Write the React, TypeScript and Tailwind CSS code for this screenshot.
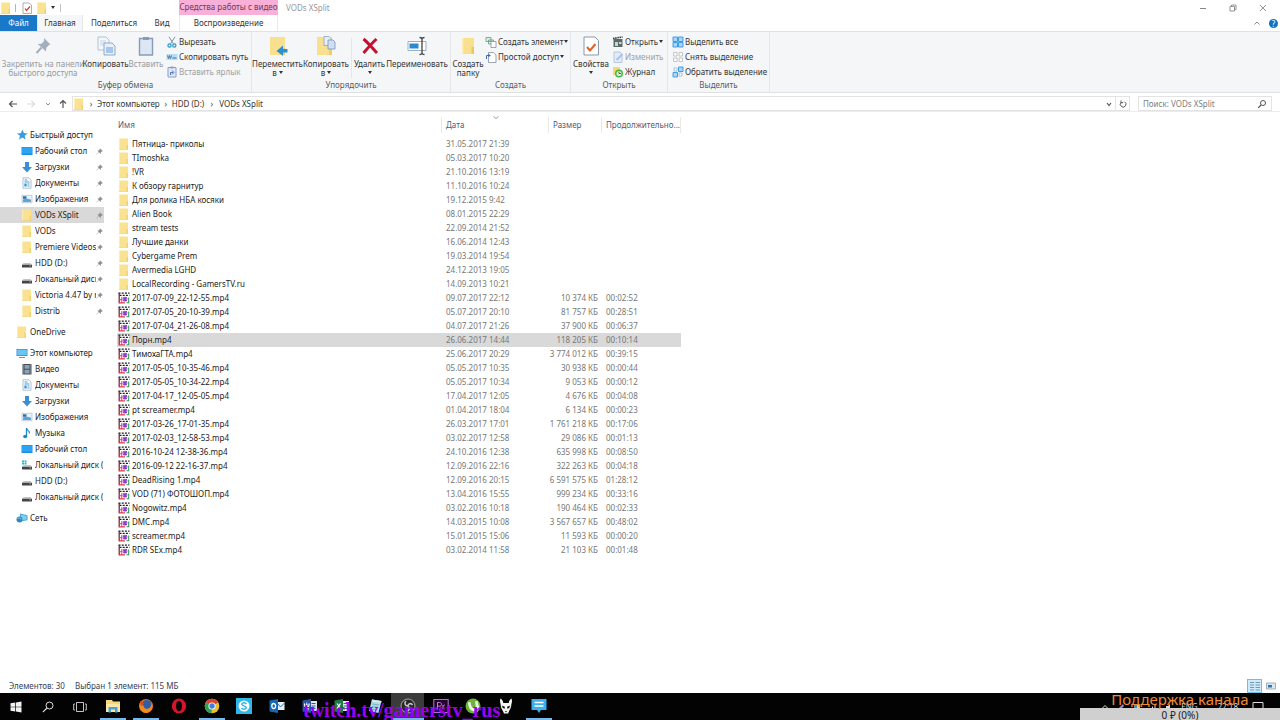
import type { ReactNode } from "react";

type IconName =
  | "folder" | "desktop" | "download" | "doc" | "picture" | "drive" | "sysdrive" | "pc" | "video" | "music" | "network" | "star";

type SideItem = { label: string; icon: IconName; active?: boolean };

const QUICK: SideItem[] = [
  { label: "Рабочий стол", icon: "desktop" },
  { label: "Загрузки", icon: "download" },
  { label: "Документы", icon: "doc" },
  { label: "Изображения", icon: "picture" },
  { label: "VODs XSplit", icon: "folder", active: true },
  { label: "VODs", icon: "folder" },
  { label: "Premiere Videos", icon: "folder" },
  { label: "HDD (D:)", icon: "drive" },
  { label: "Локальный диск", icon: "drive" },
  { label: "Victoria 4.47 by r", icon: "folder" },
  { label: "Distrib", icon: "folder" },
];

const COMPUTER: SideItem[] = [
  { label: "Видео", icon: "video" },
  { label: "Документы", icon: "doc" },
  { label: "Загрузки", icon: "download" },
  { label: "Изображения", icon: "picture" },
  { label: "Музыка", icon: "music" },
  { label: "Рабочий стол", icon: "desktop" },
  { label: "Локальный диск (C:)", icon: "sysdrive" },
  { label: "HDD (D:)", icon: "drive" },
  { label: "Локальный диск (E:)", icon: "drive" },
];

type Row = { name: string; date: string; size?: string; length?: string; selected?: boolean };

const ROWS: Row[] = [
  { name: "Пятница- приколы", date: "31.05.2017 21:39" },
  { name: "TImoshka", date: "05.03.2017 10:20" },
  { name: "!VR", date: "21.10.2016 13:19" },
  { name: "К обзору гарнитур", date: "11.10.2016 10:24" },
  { name: "Для ролика НБА косяки", date: "19.12.2015 9:42" },
  { name: "Alien Book", date: "08.01.2015 22:29" },
  { name: "stream tests", date: "22.09.2014 21:52" },
  { name: "Лучшие данки", date: "16.06.2014 12:43" },
  { name: "Cybergame Prem", date: "19.03.2014 19:54" },
  { name: "Avermedia LGHD", date: "24.12.2013 19:05" },
  { name: "LocalRecording - GamersTV.ru", date: "14.09.2013 10:21" },
  { name: "2017-07-09_22-12-55.mp4", date: "09.07.2017 22:12", size: "10 374 КБ", length: "00:02:52" },
  { name: "2017-07-05_20-10-39.mp4", date: "05.07.2017 20:10", size: "81 757 КБ", length: "00:28:51" },
  { name: "2017-07-04_21-26-08.mp4", date: "04.07.2017 21:26", size: "37 900 КБ", length: "00:06:37" },
  { name: "Порн.mp4", date: "26.06.2017 14:44", size: "118 205 КБ", length: "00:10:14", selected: true },
  { name: "ТимохаГТА.mp4", date: "25.06.2017 20:29", size: "3 774 012 КБ", length: "00:39:15" },
  { name: "2017-05-05_10-35-46.mp4", date: "05.05.2017 10:35", size: "30 938 КБ", length: "00:00:44" },
  { name: "2017-05-05_10-34-22.mp4", date: "05.05.2017 10:34", size: "9 053 КБ", length: "00:00:12" },
  { name: "2017-04-17_12-05-05.mp4", date: "17.04.2017 12:05", size: "4 676 КБ", length: "00:04:08" },
  { name: "pt screamer.mp4", date: "01.04.2017 18:04", size: "6 134 КБ", length: "00:00:23" },
  { name: "2017-03-26_17-01-35.mp4", date: "26.03.2017 17:01", size: "1 761 218 КБ", length: "00:17:06" },
  { name: "2017-02-03_12-58-53.mp4", date: "03.02.2017 12:58", size: "29 086 КБ", length: "00:01:13" },
  { name: "2016-10-24 12-38-36.mp4", date: "24.10.2016 12:38", size: "635 998 КБ", length: "00:08:50" },
  { name: "2016-09-12 22-16-37.mp4", date: "12.09.2016 22:16", size: "322 263 КБ", length: "00:04:18" },
  { name: "DeadRising 1.mp4", date: "12.09.2016 20:15", size: "6 591 575 КБ", length: "01:28:12" },
  { name: "VOD (71) ФОТОШОП.mp4", date: "13.04.2016 15:55", size: "999 234 КБ", length: "00:33:16" },
  { name: "Nogowitz.mp4", date: "03.02.2016 10:18", size: "190 464 КБ", length: "00:02:33" },
  { name: "DMC.mp4", date: "14.03.2015 10:08", size: "3 567 657 КБ", length: "00:48:02" },
  { name: "screamer.mp4", date: "15.01.2015 15:06", size: "11 593 КБ", length: "00:00:20" },
  { name: "RDR SEx.mp4", date: "03.02.2014 11:58", size: "21 103 КБ", length: "00:01:48" },
];

function Svg({ box = 12, size = "size-3", children }: { box?: number; size?: string; children: ReactNode }) {
  return (
    <svg viewBox={`0 0 ${box} ${box}`} className={`${size} shrink-0`} fill="none" aria-hidden="true">
      {children}
    </svg>
  );
}

function FolderShape() {
  return (
    <>
      <path d="M1 .5h9v11H1z" fill="#fae290" />
      <path d="M1 .5h1v11H1z" fill="#fcedb8" />
      <path d="M8.500 7H10v4.500H8.500z" fill="#f3d26c" />
      <path d="M1 11h9v.5H1z" fill="#e6c668" />
    </>
  );
}

function SmallIcon({ name }: { name: IconName }) {
  return (
    <Svg>
      {name === "folder" && <FolderShape />}
      {name === "desktop" && (
        <>
          <path d="M.5 2h11v8H.5z" fill="#1b8fe0" />
          <path d="M1 2.500h10v6H1z" fill="#2ba4f4" />
        </>
      )}
      {name === "download" && <path d="M4 1h4v5h3L6 11.500 1 6h3z" fill="#3b8dd6" />}
      {name === "doc" && (
        <>
          <path d="M2 .8h6L10 3v8.200H2z" fill="#fff" stroke="#8aa6bb" strokeWidth=".7" />
          <path d="M3.500 3h3M3.500 5h5M6.500 7h2M6.500 9h2" stroke="#4d9ac6" />
          <path d="M3.300 6.500h2.400v3H3.300z" fill="#3f97ce" />
        </>
      )}
      {name === "picture" && (
        <>
          <path d="M1 2.300h10v7.500H1z" fill="#e9f3fa" stroke="#9db4c4" strokeWidth=".6" />
          <path d="M2 3.300h3.500v2.500H2z" fill="#2e6faa" />
          <path d="M2 6.500c3-1 5-1 8 .3V9H2z" fill="#5ba6d6" />
        </>
      )}
      {(name === "drive" || name === "sysdrive") && (
        <>
          <path d="M2.500 6h7l1.500 2H1z" fill="#c4c4c4" />
          <path d="M1 7.800h10v2.700H1z" fill="#444" />
          <path d="M8.500 8.800H10" stroke="#b8e0b8" strokeWidth=".7" />
          {name === "sysdrive" && <path d="M1 1.500h2v1.700H1zM3.500 1.500h2v1.700h-2zM1 3.700h2v1.700H1zM3.500 3.700h2v1.700h-2z" fill="#21b5d8" />}
        </>
      )}
      {name === "pc" && (
        <>
          <path d="M.5 2h11v7H.5z" fill="#3a8fc9" />
          <path d="M1.200 2.700h9.600v5.500H1.200z" fill="#67c6f2" />
          <path d="M3 10.500h6" stroke="#7d8f9b" />
        </>
      )}
      {name === "video" && (
        <>
          <path d="M1.500 1h9v10.500h-9z" fill="#4c4c4c" />
          <path d="M3.500 2h5v3.800h-5zM3.500 6.800h5v3.800h-5z" fill="#83a7c1" />
          <path d="M2.500 1.500v9.500M9.500 1.500v9.500" stroke="#ddd" strokeWidth=".6" strokeDasharray="1 1" />
        </>
      )}
      {name === "music" && (
        <>
          <path d="M5.500 1v8" stroke="#1d87cf" strokeWidth="1.300" />
          <path d="M5.500 1c.3 2.500 3.500 2.500 3 5.500" stroke="#1d87cf" strokeWidth="1.200" />
          <ellipse cx="4.200" cy="9.500" rx="2.100" ry="1.700" fill="#1d87cf" />
        </>
      )}
      {name === "network" && (
        <>
          <path d="M4 1.500l7.500 1.800v5L4 9.500z" fill="#47a9da" />
          <path d="M4.800 2.800l5.700 1.300v3.300l-5.700.8z" fill="#7fd1f0" />
          <circle cx="3.500" cy="7.500" r="3" fill="#3388bb" />
          <path d="M1.500 6.500c1.500-1 3-.5 4 .8" stroke="#a9ddf0" strokeWidth=".7" />
        </>
      )}
      {name === "star" && <path d="M6.500.8l1.400 3.300 3.600.3-2.800 2.300.9 3.700-3.200-2-3.500 2 1.100-3.600L.8 4.600l3.900-.3z" fill="#3a9be0" />}
    </Svg>
  );
}

function PinIcon() {
  return (
    <Svg box={8} size="size-[7px]">
      <path d="M4.500.8l2.800 2.700-.8.2-1.300 1.400v1.300L2 3.200h1.300l1.200-1.400zM3 4.800L.8 7.200" fill="#8a8a8a" stroke="#8a8a8a" strokeWidth=".6" />
    </Svg>
  );
}

function ClipIcon() {
  return (
    <Svg>
      <path d="M.5 1h10.800v10.200H.5z" fill="#fff" />
      <path d="M.5 1.200h11M1.500 3.400h10" stroke="#1a1a1a" strokeWidth="1.300" strokeDasharray="2 1.200" />
      <path d="M1.200 1v10.200" stroke="#7d1230" strokeWidth="1.200" />
      <path d="M1 10.900h6M1 7.800h3" stroke="#e03c50" strokeWidth="1.100" />
      <path d="M3.800 5v6" stroke="#d83048" strokeWidth=".9" />
      <path d="M10.700 5.500v5.700M8.500 10.800h2.700" stroke="#2f9a58" strokeWidth="1.100" />
      <path d="M4.500 7h5M7 4.800v4.900M5.300 5.300l3.400 3.700M8.800 5.200L5.300 9" stroke="#8b3fd0" strokeWidth="1.200" />
    </Svg>
  );
}

function Caret() {
  return (
    <svg viewBox="0 0 4 3" className="h-[3px] w-1 shrink-0" aria-hidden="true">
      <path d="M0 0h4L2 3z" fill="#333" />
    </svg>
  );
}

function BigButton({ width, icon, lines, caret, dim }: { width: string; icon: ReactNode; lines: string[]; caret?: boolean; dim?: boolean }) {
  return (
    <button type="button" className={`flex shrink-0 flex-col items-center leading-[9px] whitespace-nowrap ${width} ${dim ? "text-[#989ba0]" : "text-[#333]"}`}>
      <span className="mb-px flex h-6 items-center">{icon}</span>
      {lines.map((line, i) => (
        <span key={line} className="flex items-center gap-0.5">
          {line}
          {caret && i === lines.length - 1 && i > 0 ? <Caret /> : null}
        </span>
      ))}
      {caret && lines.length === 1 ? <span className="flex h-[9px] items-center"><Caret /></span> : null}
    </button>
  );
}

function SmallButton({ icon, label, caret, dim }: { icon: ReactNode; label: string; caret?: boolean; dim?: boolean }) {
  return (
    <button type="button" className={`flex h-[15px] items-center gap-px whitespace-nowrap ${dim ? "text-[#9c9fa3]" : "text-[#333]"}`}>
      {icon}
      {label}
      {caret ? <Caret /> : null}
    </button>
  );
}

function Group({ width, label, children }: { width: string; label: string; children: ReactNode }) {
  return (
    <section aria-label={label} className={`flex shrink-0 flex-col border-r border-[#e4e6e9] ${width}`}>
      <div className="flex flex-1 items-start pt-0.5">{children}</div>
      <div className="pb-px text-center leading-3 text-[#5c5c5c]">{label}</div>
    </section>
  );
}

function CopyPages() {
  return (
    <>
      <path d="M2 1h8l3 3v10H2z" fill="#f4f8fc" stroke="#a3b4c6" strokeWidth=".8" />
      <path d="M4 5h6M4 7h6M4 9h6" stroke="#b4cbe4" strokeWidth=".8" />
      <path d="M8 7h8l3 3v9H8z" fill="#e6effa" stroke="#7b9abd" strokeWidth=".8" />
      <path d="M10 11h7v6h-7z" fill="#a7c6ec" />
    </>
  );
}

function Ribbon() {
  return (
    <div className="flex h-[62px] overflow-hidden border-y border-[#dfe1e4] bg-[#f5f6f8]">
      <Group width="w-[252px]" label="Буфер обмена">
        <BigButton dim width="ml-0.5 w-[82px]" lines={["Закрепить на панели", "быстрого доступа"]} icon={
          <Svg box={20} size="size-5">
            <path d="M11 2l6.500 6.500-1.500.5-2.700 2.700-.3 3.800L4.800 8l3.800-.3L11 5z" fill="#a3afbf" />
            <path d="M8.500 11.500L3.500 17" stroke="#a3afbf" strokeWidth="2" />
          </Svg>
        } />
        <BigButton width="w-[43px]" lines={["Копировать"]} icon={<Svg box={20} size="size-5"><CopyPages /></Svg>} />
        <BigButton dim width="w-[38px]" lines={["Вставить"]} icon={
          <Svg box={20} size="size-5">
            <path d="M3.500 2.500h13v16.500h-13z" fill="#dce7f6" stroke="#8a9bb5" strokeWidth="1.400" />
            <path d="M7 1h6v3H7z" fill="#8a9bb5" />
          </Svg>
        } />
        <div className="ml-px">
          <SmallButton label="Вырезать" icon={
            <Svg><path d="M3 .8l4.500 7M9 .8L4.500 7.800" stroke="#7996aa" /><circle cx="3.500" cy="9.500" r="1.600" stroke="#2799c9" strokeWidth="1.200" /><circle cx="8.300" cy="9.500" r="1.600" stroke="#2799c9" strokeWidth="1.200" /></Svg>
          } />
          <SmallButton label="Скопировать путь" icon={
            <Svg><path d="M.5 3h11v6H.5z" fill="#b9dcf3" /><path d="M1.500 4.500l1 3 1-3 1 3 1-3" stroke="#2d6792" strokeWidth=".8" /><path d="M6.500 7h4" stroke="#2d7cb5" /></Svg>
          } />
          <SmallButton dim label="Вставить ярлык" icon={
            <Svg><path d="M2 1.500h8V11H2z" fill="#e1eafa" stroke="#8b9fc3" /><path d="M4.500.5h3v2h-3z" fill="#8b9fc3" /><path d="M4.500 9V6.500H7M6 4.500l2 2-2 2" stroke="#4c76b8" /></Svg>
          } />
        </div>
      </Group>

      <Group width="w-[199px]" label="Упорядочить">
        <BigButton caret width="ml-px w-[49px]" lines={["Переместить", "в"]} icon={
          <Svg box={20} size="size-5"><path d="M2 1h15v18H2z" fill="#f9e08e" /><path d="M14 12h3v7h-3z" fill="#efcd67" /><path d="M19.500 13h-4.500v-3.500L8.500 15l6.500 5v-3.500h4.500z" fill="#2f8fd3" /></Svg>
        } />
        <BigButton caret width="w-[48px]" lines={["Копировать", "в"]} icon={
          <Svg box={20} size="size-5"><path d="M1 1h15v18H1z" fill="#f9e08e" /><path d="M13 12h3v7h-3z" fill="#efcd67" /><path d="M8 .5h5l2 2v7H8z" fill="#e6effa" stroke="#8ba3c0" strokeWidth=".8" /><path d="M12 4h5l2 2v7h-7z" fill="#cfe0f6" stroke="#7893b5" strokeWidth=".8" /></Svg>
        } />
        <div className="mt-1 ml-px h-10 border-l border-[#e4e6e9]" />
        <BigButton caret width="w-[35px]" lines={["Удалить"]} icon={
          <Svg box={20} size="size-5"><path d="M3.500 3c4 3 9 9.500 13.500 14M16.500 3C12 7 7 13 3.500 17" stroke="#c1122f" strokeWidth="3" /></Svg>
        } />
        <BigButton width="w-[60px]" lines={["Переименовать"]} icon={
          <Svg box={20} size="size-5"><path d="M1 5.500h18v9H1z" fill="#fff" stroke="#9bb0c0" /><path d="M2.500 7.500h9v5h-9z" fill="#2b8bd0" /><path d="M12.500 1.500c1.500 0 2.500.5 2.500 1.500 0-1 1-1.500 2.500-1.500M15 3v14M12.500 18.500c1.500 0 2.500-.5 2.500-1.500 0 1 1 1.500 2.500 1.500" stroke="#444" strokeWidth="1.300" /></Svg>
        } />
      </Group>

      <Group width="w-[120px]" label="Создать">
        <BigButton width="w-[34px]" lines={["Создать", "папку"]} icon={
          <Svg box={20} size="size-5"><path d="M4 2h12v16H4z" fill="#f9e08e" /><path d="M4 2h1.500v16H4z" fill="#fbecb9" /><path d="M13.500 11H16v7h-2.500z" fill="#ebc75d" /></Svg>
        } />
        <div>
          <SmallButton caret label="Создать элемент" icon={
            <Svg><path d="M1 1.500h5v4H1zM3.500 4h5v4h-5z" fill="#e4f1e8" stroke="#5f9a81" strokeWidth=".8" /><path d="M6 5.500h5v6H6z" fill="#fff" stroke="#7f93a8" strokeWidth=".8" /></Svg>
          } />
          <SmallButton caret label="Простой доступ" icon={
            <Svg><path d="M3.500 1.500h5L11 4v7.500H3.500z" fill="#fff" stroke="#7f8fa5" strokeWidth=".8" /><path d="M1.500 8V4.500H5M3.500 3L5 4.500 3.500 6" stroke="#2f5fa5" strokeWidth=".9" /></Svg>
          } />
        </div>
      </Group>

      <Group width="w-[97px]" label="Открыть">
        <BigButton caret width="w-10" lines={["Свойства"]} icon={
          <Svg box={20} size="size-5"><path d="M3 1h11l3.500 3.500V19H3z" fill="#fff" stroke="#8a99aa" /><path d="M6 11l3 3.500L14.500 8" stroke="#df6126" strokeWidth="2" /></Svg>
        } />
        <div className="ml-px">
          <SmallButton caret label="Открыть" icon={
            <Svg><path d="M1.500 3h9v8h-9z" fill="#5b6a64" /><path d="M1 2.500l9.500-1.500" stroke="#333" strokeWidth="1.600" strokeDasharray="1.500 .7" /><path d="M3 6h3v4H3zM7 6h2.500v2H7z" fill="#c5d6ce" /></Svg>
          } />
          <SmallButton dim label="Изменить" icon={
            <Svg><path d="M2 1h6l2 2v8.500H2z" fill="#e3ecf8" stroke="#a9bcd5" strokeWidth=".8" /><path d="M4.500 9L10.500 3" stroke="#a7c5ea" strokeWidth="2" /></Svg>
          } />
          <SmallButton label="Журнал" icon={
            <Svg><path d="M1 1h7v8H1z" fill="#f5d876" /><circle cx="7" cy="7.500" r="4" fill="#4bb548" /><circle cx="7" cy="7.500" r="2.500" fill="#d9f2d5" /><path d="M7 5.500v2h2" stroke="#2c6e2d" strokeWidth=".9" /></Svg>
          } />
        </div>
      </Group>

      <Group width="w-[102px]" label="Выделить">
        <div className="ml-1">
          <SmallButton label="Выделить все" icon={
            <Svg><path d="M1 1h4.500v4.500H1zM6.500 1H11v4.500H6.500zM1 6.500h4.500V11H1zM6.500 6.500H11V11H6.500z" fill="#a8d6f8" stroke="#3396e0" strokeWidth=".9" /></Svg>
          } />
          <SmallButton label="Снять выделение" icon={
            <Svg><path d="M1.500 1.500h3.500V5H1.500zM7 1.500h3.500V5H7zM1.500 7h3.500v3.500H1.500zM7 7h3.500v3.500H7z" fill="#fff" stroke="#b9b9b9" strokeWidth=".8" /></Svg>
          } />
          <SmallButton label="Обратить выделение" icon={
            <Svg><path d="M6.500 1H11v4.500H6.500zM1 6.500h4.500V11H1z" fill="#a8d6f8" stroke="#3396e0" strokeWidth=".9" /><path d="M2 2h3v3H2zM7 7h3v3H7z" fill="#fff" stroke="#8fb6d6" strokeWidth=".8" /></Svg>
          } />
        </div>
      </Group>
    </div>
  );
}

function TitleBar() {
  return (
    <div className="flex h-[15px] items-center">
      <div className="flex w-[179px] items-center gap-[3px]">
        <SmallIcon name="folder" />
        <span className="h-2 border-l border-[#b5b5b5]" />
        <button type="button" aria-label="Свойства" className="ml-0.5">
          <Svg><path d="M2 1h6l2.500 2v8.500H2z" fill="#fff" stroke="#9a9a9a" strokeWidth=".8" /><path d="M4 6.500l1.500 2L9 4.500" stroke="#d83c2c" strokeWidth="1.200" /></Svg>
        </button>
        <button type="button" aria-label="Новая папка"><SmallIcon name="folder" /></button>
        <button type="button" aria-label="Настройка панели"><Caret /></button>
        <span className="ml-0.5 h-2 border-l border-[#c5c5c5]" />
      </div>
      <div className="flex w-[99px] justify-center self-stretch bg-[#f8b0d9] leading-[14px] whitespace-nowrap text-[#6b3a58]">Средства работы с видео</div>
      <h1 className="ml-2 text-[#999]">VODs XSplit</h1>
      <div className="ml-auto flex pr-0.5 text-[#888]">
        <button type="button" aria-label="Свернуть" className="flex w-[30px] justify-center"><Svg box={8} size="size-2"><path d="M1 4.500h6" stroke="currentColor" /></Svg></button>
        <button type="button" aria-label="Развернуть" className="flex w-[30px] justify-center"><Svg box={8} size="size-2"><path d="M1 2.500h4.500V7H1zM2.500 2.500V1H7v4.500H5.500" stroke="currentColor" strokeWidth=".9" /></Svg></button>
        <button type="button" aria-label="Закрыть" className="flex w-[30px] justify-center"><Svg box={8} size="size-2"><path d="M1 1l6 6M7 1L1 7" stroke="currentColor" strokeWidth=".9" /></Svg></button>
      </div>
    </div>
  );
}

function Tabs() {
  return (
    <nav className="flex h-4 items-stretch leading-4 text-[#333]">
      <button type="button" className="w-[37px] bg-[#1a78c8] text-white">Файл</button>
      <button type="button" className="w-[46px] border-x border-[#e4e6e9] bg-[#f5f6f8]">Главная</button>
      <button type="button" className="w-[62px]">Поделиться</button>
      <button type="button" className="w-[34px]">Вид</button>
      <button type="button" className="w-[99px] border-x border-[#f3e3ee]">Воспроизведение</button>
      <div className="ml-auto flex items-center gap-2 pr-0.5">
        <Svg box={8} size="size-2"><path d="M1.500 5.500L4 3l2.500 2.500" stroke="#888" /></Svg>
        <button type="button" aria-label="Справка" className="size-[9px] rounded-full bg-[#1270c4] text-center leading-[9px] text-white">?</button>
      </div>
    </nav>
  );
}

function AddressBar() {
  return (
    <div className="flex h-[19px] items-center border-b border-[#ececec] px-2 pt-[3px] text-[#333]">
      <button type="button" aria-label="Назад"><Svg box={10} size="size-2.5"><path d="M9 5H1.500M4.500 2l-3 3 3 3" stroke="#555" strokeWidth="1.200" /></Svg></button>
      <button type="button" aria-label="Вперёд" className="ml-2"><Svg box={10} size="size-2.5"><path d="M1 5h7.500M5.500 2l3 3-3 3" stroke="#dcdcdc" strokeWidth="1.200" /></Svg></button>
      <button type="button" aria-label="Последние места" className="ml-2"><Svg box={8} size="size-2"><path d="M2 3l2 2 2-2" stroke="#888" /></Svg></button>
      <button type="button" aria-label="Вверх" className="ml-1.5"><Svg box={10} size="size-2.5"><path d="M5 9V1.500M2 4.500l3-3 3 3" stroke="#555" strokeWidth="1.200" /></Svg></button>
      <div className="ml-1 flex h-[15px] flex-1 items-center border border-[#e3e3e3] bg-white">
        <SmallIcon name="folder" />
        <span className="w-3 text-center">›</span>
        <a href="#pc">Этот компьютер</a>
        <span className="w-3 text-center">›</span>
        <a href="#d">HDD (D:)</a>
        <span className="w-[15px] text-center">›</span>
        <a href="#vods">VODs XSplit</a>
        <button type="button" aria-label="Журнал адресов" className="mr-0.5 ml-auto"><Svg box={8} size="size-2"><path d="M2 3l2 2.500L6 3" stroke="#555" strokeWidth="1.200" /></Svg></button>
        <button type="button" aria-label="Обновить" className="flex h-full w-[14px] items-center justify-center border-l border-[#e3e3e3]">
          <Svg box={8} size="size-2"><path d="M5.500 1.800A2.800 2.800 0 1 1 2 2.500M2 .5v2.200h2.200" stroke="#444" strokeWidth=".9" /></Svg>
        </button>
      </div>
      <div className="ml-2 flex h-[15px] w-[134px] items-center border border-[#e3e3e3] bg-white px-1">
        <input type="search" aria-label="Поиск" placeholder="Поиск: VODs XSplit" className="min-w-0 flex-1 outline-none placeholder:text-[#7d7d7d]" />
        <Svg box={10} size="size-2.5"><circle cx="6" cy="4" r="2.500" stroke="#555" /><path d="M4 6L1.200 8.800" stroke="#555" strokeWidth="1.200" /></Svg>
      </div>
    </div>
  );
}

function SideLink({ item, nested, pinned }: { item: SideItem; nested?: boolean; pinned?: boolean }) {
  return (
    <a href="#item" className={`flex h-4 items-center overflow-hidden pr-px whitespace-nowrap ${nested ? "pl-[21px]" : "pl-4"} ${item.active ? "bg-[#d9d9d9]" : ""}`}>
      <SmallIcon name={item.icon} />
      <span className="ml-0.5 min-w-0 flex-1 overflow-hidden">{item.label}</span>
      {pinned ? <PinIcon /> : null}
    </a>
  );
}

function Sidebar() {
  return (
    <aside className="w-[104px] shrink-0 pt-[15px] text-[#222]">
      <SideLink item={{ label: "Быстрый доступ", icon: "star" }} />
      {QUICK.map((item) => <SideLink key={item.label} item={item} nested pinned />)}
      <div className="my-[5px]"><SideLink item={{ label: "OneDrive", icon: "folder" }} /></div>
      <SideLink item={{ label: "Этот компьютер", icon: "pc" }} />
      {COMPUTER.map((item) => <SideLink key={item.label} item={item} nested />)}
      <div className="mt-[5px]"><SideLink item={{ label: "Сеть", icon: "network" }} /></div>
    </aside>
  );
}

function FileTable() {
  return (
    <table className="ml-[13px] w-[564px] table-fixed self-start text-left whitespace-nowrap text-[#777]">
      <colgroup>
        <col />
        <col className="w-[107px]" />
        <col className="w-[53px]" />
        <col className="w-[79px]" />
      </colgroup>
      <thead className="text-[#4c607a]">
        <tr className="h-[25px]">
          <th className="p-0 font-normal"><div className="h-4 border-r border-[#e9e9e9] pl-px leading-4">Имя</div></th>
          <th className="relative p-0 font-normal">
            <div className="h-4 border-r border-[#e9e9e9] pl-1 leading-4">Дата</div>
            <span className="absolute inset-x-0 top-0.5 flex justify-center"><Svg box={8} size="size-2"><path d="M1.500 2.500L4 4.500l2.500-2" stroke="#888" strokeWidth=".8" /></Svg></span>
          </th>
          <th className="p-0 font-normal"><div className="h-4 border-r border-[#e9e9e9] pl-1 leading-4">Размер</div></th>
          <th className="p-0 font-normal"><div className="h-4 border-r border-[#e9e9e9] pl-1 leading-4">Продолжительно...</div></th>
        </tr>
      </thead>
      <tbody>
        {ROWS.map((row) => (
          <tr key={row.name} className={`h-[14px] ${row.selected ? "bg-[#d9d9d9]" : ""}`}>
            <td className="p-0">
              <div className="flex h-[14px] items-center gap-0.5 pl-px text-[#222]">
                {row.size ? <ClipIcon /> : <SmallIcon name="folder" />}
                {row.name}
              </div>
            </td>
            <td className="p-0 pl-1">{row.date}</td>
            <td className="p-0 pr-1 text-right">{row.size}</td>
            <td className="p-0 pl-1">{row.length}</td>
          </tr>
        ))}
      </tbody>
    </table>
  );
}

type TaskApp = { name: string; open?: boolean; current?: boolean; art: ReactNode };

const APPS: TaskApp[] = [
  { name: "Проводник", open: true, art: <><path d="M1 2h6l1 1.500h7V14H1z" fill="#f6d77a" /><path d="M1 6h14v8H1z" fill="#fbe7a5" /><path d="M3.500 9h9v5.500h-2.500V11.500H6v3H3.500z" fill="#4aa3d8" /></> },
  { name: "Firefox", open: true, art: <><circle cx="8" cy="8" r="7" fill="#e66a1c" /><circle cx="8.800" cy="6.500" r="4.500" fill="#2c5fa8" /><path d="M1.500 5c1 2 2 2.500 4 2.500 0 3 3 4 5 3s3-2.500 3.500-6c1.500 4 0 9-4.500 10.200C5 15.500 1 12 1.500 5z" fill="#f28a22" /><path d="M2 3.500C4 3 5 4 6 5.500L3 8z" fill="#d94b17" /></> },
  { name: "Opera", art: <><ellipse cx="8" cy="8" rx="7.200" ry="7.500" fill="#d5142b" /><ellipse cx="8" cy="8" rx="3" ry="5.200" fill="#050505" /></> },
  { name: "Chrome", open: true, art: <><circle cx="8" cy="8" r="7.300" fill="#e8c02c" /><path d="M8 8L1.700 4.400A7.300 7.300 0 0 1 14.300 4.400z" fill="#d9432f" /><path d="M8 8L1.700 4.400A7.300 7.300 0 0 0 7.500 15.300z" fill="#2f9e50" /><circle cx="8" cy="8" r="3.600" fill="#fff" /><circle cx="8" cy="8" r="2.700" fill="#3f7fe0" /></> },
  { name: "Skype", art: <><path d="M0 0h16v16H0z" fill="#2db7ea" /><circle cx="8" cy="8" r="5.500" fill="#fff" /><path d="M10.500 6C9.500 4.300 5.800 4.500 5.800 6.300 5.800 8.200 10.300 7.600 10.300 9.700 10.300 11.500 6.500 11.700 5.500 9.800" stroke="#2db7ea" strokeWidth="1.500" /></> },
  { name: "Outlook", art: <><path d="M8 4h7.500v8H8z" fill="#e7f0fa" /><path d="M8.500 5.500l3 3.500 4-4" stroke="#2772bd" /><path d="M.5 2.500L9 1v14L.5 13.500z" fill="#1469b5" /><ellipse cx="4.700" cy="8" rx="1.900" ry="2.500" stroke="#fff" strokeWidth="1.300" /></> },
  { name: "Word", art: <><path d="M8 3h7v10H8z" fill="#dce7f6" /><path d="M9.500 5.500h4M9.500 8h4M9.500 10.500h4" stroke="#2d57a0" /><path d="M.5 2.500L9 1v14L.5 13.500z" fill="#2b56a0" /><path d="M2.300 5.500l1.200 5 1.300-4.500 1.300 4.500 1.200-5" stroke="#fff" strokeWidth="1.100" /></> },
  { name: "Excel", art: <><path d="M8 3h7v10H8z" fill="#dff0e4" /><path d="M9.500 5.500h4M9.500 8h4M9.500 10.500h4" stroke="#1f7a45" /><path d="M.5 2.500L9 1v14L.5 13.500z" fill="#1f7a45" /><path d="M3 5.500l3.500 5M6.500 5.500L3 10.500" stroke="#fff" strokeWidth="1.300" /></> },
  { name: "Блокнот", art: <><path d="M5 1.500l9.500 1.500L11.500 15 2 13z" fill="#a9dbe8" /><path d="M5 1.500l9.500 1.500-.5 2L4.500 3.500z" fill="#dbe7ea" /><path d="M5.500 6l6.500 1M5 8.500l6 1M4.500 11l6 1" stroke="#5f9db5" strokeWidth=".7" /></> },
  { name: "OBS", open: true, current: true, art: <><circle cx="8" cy="8" r="7" fill="#262626" stroke="#b5b5b5" strokeWidth=".9" /><path d="M6 3c-2 2-1 5 2 5M12.500 7C11 4.500 8 6 8 8M7 13c2.500 0 3-3.500 1-5" stroke="#c5c5c5" strokeWidth="1.600" /></> },
  { name: "Premiere", art: <><path d="M.8 1.500h14.400v13H.8z" fill="#25002f" stroke="#b567d8" strokeWidth="1.100" /><path d="M4.500 11.500v-7h2c2.800 0 2.800 3.700 0 3.700h-2M10 11.500V7M10 8.500c.5-1.300 1.200-1.500 2-1.500" stroke="#c883e8" /></> },
  { name: "uTorrent", art: <><circle cx="8" cy="8" r="7.500" fill="#6db33a" /><path d="M3 4.500l2.500-.5c.5 4 1.500 6 3.500 6s2-2 1-6.500l2.500-.5c.5 3 1 5 2 6.500L12 12c-2 2-5.500 1.500-7.500-1.500C3.500 8.500 3 6.500 3 4.500z" fill="#eef7e6" /></> },
  { name: "foobar2000", art: <><path d="M2.500.5c1.500.5 2.500 2.500 2.800 4.500h5.400c.3-2 1.300-4 2.800-4.500.8 2 .5 4-.2 6 .3 3-1.800 5.500-3.300 9H6C4.500 12 2.400 9.500 2.700 6.500 2 4.500 1.700 2.500 2.500.5z" fill="#f4f4f4" /><path d="M3.800 7.500l3 1.300v2L4.800 10zM12.200 7.500l-3 1.300v2l2-.8zM7 13h2l-1 1.500z" fill="#111" /></> },
  { name: "Сообщения", open: true, art: <><path d="M.5 1h15v11H10l-2 3-2-3H.5z" fill="#3bb0ec" /><path d="M3.500 4.500h9M3.500 8h9" stroke="#fff" strokeWidth="1.700" /></> },
];

function Taskbar() {
  return (
    <footer className="relative flex h-[27px] shrink-0 items-stretch overflow-hidden bg-[#030303] text-white">
      <button type="button" aria-label="Пуск" className="flex w-8 items-center justify-center">
        <Svg><path d="M.5 2.200L5.300 1.500v4.200H.5zM6 1.400l5.500-.8v5.100H6zM.5 6.300h4.800v4.200L.5 9.800zM6 6.300h5.500v5.100L6 10.600z" fill="#f2f2f2" /></Svg>
      </button>
      <button type="button" aria-label="Поиск в Windows" className="flex w-8 items-center justify-center">
        <Svg><circle cx="7.500" cy="4.500" r="3.500" stroke="#ddd" /><path d="M5 7L.8 11.200" stroke="#ddd" strokeWidth="1.100" /></Svg>
      </button>
      <button type="button" aria-label="Представление задач" className="flex w-8 items-center justify-center">
        <Svg box={14} size="size-3.5"><path d="M3.500 2.500h7v9h-7zM2 4H.7v6H2M12 4h1.300v6H12" stroke="#ddd" strokeWidth=".9" /></Svg>
      </button>
      <div className="ml-px flex w-[458px]">
        {APPS.map((app) => (
          <button key={app.name} type="button" aria-label={app.name} className={`flex flex-1 flex-col items-center justify-between ${app.current ? "bg-[#3b3b3b]" : ""}`}>
            <span className="pt-[5px]"><Svg box={16} size="size-4">{app.art}</Svg></span>
            <span className={`h-0.5 ${app.current ? "w-full" : "w-[26px]"} ${app.open ? "bg-[#76b9ed]" : ""}`} />
          </button>
        ))}
      </div>
      <div className="ml-auto flex items-center gap-2 pr-4 text-[#ddd]">
        <Svg box={8} size="size-2"><path d="M1 5.500l3-3 3 3" stroke="#ddd" /></Svg>
        <Svg box={8} size="size-2"><path d="M1 6l5-5 1 2-4 4z" fill="#8d8fd0" /></Svg>
        <Svg box={8} size="size-2"><path d="M1 2h6v5H1z" fill="#2f9bd0" /><path d="M4 2h3v3H4z" fill="#e8d44f" /></Svg>
        <Svg box={8} size="size-2"><path d="M1 7V5M3.500 7V3.500M6 7V2" stroke="#ddd" /></Svg>
        <Svg box={8} size="size-2"><path d="M1 3h2l2-2v6L3 5H1z" fill="#ddd" /></Svg>
        <span>ENG</span>
        <span className="mr-1.5 ml-3">22:18</span>
        <Svg><path d="M1 1.500h10v8H7.500L6 11 4.500 9.500H1z" stroke="#ddd" /></Svg>
      </div>

      <p className="absolute top-1.5 left-[303px] font-['Liberation_Serif',serif] text-[20px] leading-[22px] font-bold whitespace-nowrap text-[#9a00f5]">twitch.tv/gamerstv_rus</p>
    </footer>
  );
}

function DonationGoal() {
  return (
    <div className="absolute right-0 bottom-0 w-[200px] text-center">
      <p className="text-[15px] leading-[18px] text-[#ee8a35]">Поддержка канала</p>
      <div className="h-3 bg-[#d0d0d0] text-[10px] leading-[14px] text-[#222]">0 ₽ (0%)</div>
    </div>
  );
}

export default function App() {
  return (
    <div className="relative flex h-screen flex-col overflow-hidden bg-white font-['Noto_Sans',sans-serif] text-[8px] leading-[14px]">
      <header>
        <TitleBar />
        <Tabs />
        <Ribbon />
        <AddressBar />
      </header>
      <main className="flex min-h-0 flex-1">
        <Sidebar />
        <FileTable />
      </main>
      <div className="flex h-[15px] shrink-0 items-center gap-2.5 pl-[9px] text-[#31435c]">
        <span>Элементов: 30</span>
        <span>Выбран 1 элемент: 115 МБ</span>
        <div className="ml-auto flex items-center gap-1 pr-1">
          <button type="button" aria-label="Таблица" className="flex h-[14px] w-[15px] items-center justify-center border border-[#6cbfe8] bg-[#cfeafa]">
            <Svg><path d="M1 2.500h4M1 5h4M1 7.500h4M1 10h4M6.500 2.500H11M6.500 5H11M6.500 7.500H11M6.500 10H11" stroke="#5f93ad" strokeWidth=".9" /></Svg>
          </button>
          <button type="button" aria-label="Крупные значки">
            <Svg box={10} size="size-2.5"><path d="M.5 2h9v6h-9z" fill="#dce8f0" stroke="#8ba1b0" strokeWidth=".8" /><path d="M2 4h4v2.500H2z" fill="#2f77a8" /></Svg>
          </button>
        </div>
      </div>
      <Taskbar />
      <DonationGoal />
    </div>
  );
}
